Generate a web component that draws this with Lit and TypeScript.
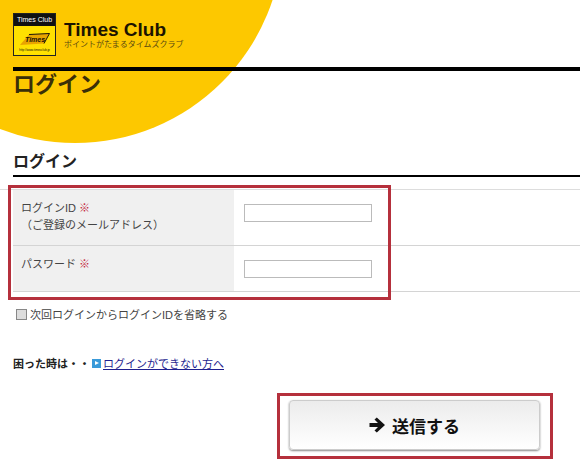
import { css, LitElement, html } from "lit";
import { customElement } from "lit/decorators.js";

@customElement("app-root")
export class AppRoot extends LitElement {
  render() {
    return html`
      <div class="page">
        <div class="circle"></div>
        <header class="head">
          <div class="logo">
            <div class="logo-top">Times Club</div>
            <div class="logo-body">
              <svg width="30" height="14" viewBox="0 0 30 14">
                <path d="M0 13 L24 11.5 L29.5 1.5 L9 2.5 Z" fill="#e8a400" />
                <path d="M9 2.5 L29.5 1.5 L24 11.5" fill="none" stroke="#1a1208" stroke-width="1" />
                <text x="5" y="10" class="logo-word">Times</text>
              </svg>
              <div class="logo-url">http://www.timesclub.jp</div>
            </div>
          </div>
          <div class="brand">
            <div class="brand-name">Times Club</div>
            <div class="brand-sub">ポイントがたまるタイムズクラブ</div>
          </div>
        </header>
        <h1>ログイン</h1>
        <h2>ログイン</h2>
        <div class="form">
          <div class="row first">
            <div class="label">
              ログインID <span class="req">※</span><br />
              <span class="note">（ご登録のメールアドレス）</span>
            </div>
            <div class="field"><input type="text" /></div>
          </div>
          <div class="row second">
            <div class="label">パスワード <span class="req">※</span></div>
            <div class="field"><input type="password" /></div>
          </div>
          <div class="mark mark-form"></div>
        </div>
        <label class="remember">
          <span class="box"></span>次回ログインからログインIDを省略する
        </label>
        <div class="help">
          <b>困った時は・・</b>
          <span class="help-icon"></span>
          <a href="#">ログインができない方へ</a>
        </div>
        <div class="actions">
          <button type="button">
            <svg width="17" height="16" viewBox="0 0 17 16">
              <path d="M0.5 6 H9 L5.5 2.6 L7.8 0.5 L16 8 L7.8 15.5 L5.5 13.4 L9 10 H0.5 Z" fill="#111" />
            </svg>
            送信する
          </button>
          <div class="mark mark-button"></div>
        </div>
      </div>
    `;
  }

  static styles = css`
    :host {
      display: block;
      width: 580px;
      height: 470px;
      overflow: hidden;
      background: #fff;
      color: #333;
      font-family: "Liberation Sans", "Noto Sans CJK JP", sans-serif;
      font-size: 11px;
    }

    .page {
      position: relative;
      width: 580px;
      height: 470px;
      padding: 13px 0 0 13px;
      box-sizing: border-box;
      overflow: hidden;
    }

    .circle {
      position: absolute;
      left: -133px;
      top: -273px;
      width: 416px;
      height: 416px;
      border-radius: 50%;
      background: #fdc800;
    }

    .head {
      position: relative;
      display: flex;
      gap: 8px;
      height: 54px;
      border-bottom: 4px solid #000;
    }

    .logo {
      width: 43px;
      height: 43px;
      box-sizing: border-box;
      border: 1px solid #222;
      display: flex;
      flex-direction: column;
      background: #ffe100;
    }

    .logo-top {
      height: 12px;
      background: #111;
      color: #fff;
      font-size: 7px;
      line-height: 12px;
      text-align: center;
      white-space: nowrap;
    }

    .logo-body {
      flex: 1;
      display: flex;
      flex-direction: column;
      align-items: center;
      padding-top: 6px;
    }

    .logo-word {
      fill: #1a1208;
      font-size: 7px;
      font-weight: 700;
      font-style: italic;
    }

    .logo-url {
      font-size: 3px;
      line-height: 5px;
      margin-top: 2px;
      color: #111;
      white-space: nowrap;
    }

    .brand {
      padding-top: 7px;
    }

    .brand-name {
      font-size: 19px;
      line-height: 20px;
      font-weight: 700;
      color: #1c1400;
    }

    .brand-sub {
      margin-top: -1px;
      font-size: 8px;
      line-height: 12px;
      color: #5a4a10;
      white-space: nowrap;
    }

    h1 {
      position: relative;
      margin: 0;
      height: 27px;
      font-size: 22px;
      line-height: 27px;
      font-weight: 700;
      color: #3a2f08;
    }

    h2 {
      position: relative;
      margin: 53px 0 0;
      height: 24px;
      font-size: 16px;
      line-height: 21px;
      font-weight: 700;
      color: #222;
      border-bottom: 2px solid #000;
      box-sizing: content-box;
    }

    .form {
      position: relative;
      margin: 12px 0 0 -13px;
      padding-left: 13px;
      border-top: 1px solid #ddd;
    }

    .row {
      display: flex;
      border-bottom: 1px solid #d4d4d4;
    }

    .row.first {
      height: 55px;
    }

    .row.second {
      height: 45px;
    }

    .label {
      width: 221px;
      box-sizing: border-box;
      padding: 10px 0 0 8px;
      background: #f0f0f0;
      line-height: 17px;
      color: #444;
    }

    .req {
      color: #c4263a;
    }

    .field {
      padding: 14px 0 0 10px;
    }

    input {
      display: block;
      width: 128px;
      height: 18px;
      box-sizing: border-box;
      margin: 0;
      border: 1px solid #bbb;
      background: #fff;
    }

    .mark {
      position: absolute;
      box-sizing: border-box;
      border: 3px solid #b5303c;
      pointer-events: none;
    }

    .mark-form {
      left: 8px;
      top: -5px;
      width: 383px;
      height: 115px;
    }

    .remember {
      display: flex;
      align-items: center;
      margin: 15px 0 0 3px;
      height: 14px;
      color: #444;
      white-space: nowrap;
    }

    .box {
      width: 9px;
      height: 9px;
      margin-right: 3px;
      border: 1px solid #888;
      background: #ddd;
    }

    .help {
      display: flex;
      align-items: center;
      margin-top: 35px;
      height: 14px;
      color: #222;
      white-space: nowrap;
    }

    .help b {
      width: 79px;
      font-weight: 700;
    }

    .help-icon {
      width: 9px;
      height: 9px;
      margin-right: 2px;
      background: #3a9ad9;
      position: relative;
    }

    .help-icon::after {
      content: "";
      position: absolute;
      left: 3px;
      top: 2px;
      border-left: 4px solid #fff;
      border-top: 2.5px solid transparent;
      border-bottom: 2.5px solid transparent;
    }

    a {
      color: #1f1f8f;
      text-decoration: underline;
    }

    .actions {
      position: relative;
      margin: 30px 0 0 276px;
      width: 251px;
    }

    button {
      display: flex;
      align-items: center;
      justify-content: center;
      gap: 6px;
      width: 251px;
      height: 50px;
      padding: 0;
      border: 1px solid #ccc;
      border-radius: 4px;
      background: linear-gradient(#ececec, #fff);
      box-shadow: 0 1px 2px #888;
      color: #111;
      font: 700 17px "Liberation Sans", "Noto Sans CJK JP", sans-serif;
    }

    .mark-button {
      left: -12px;
      top: -7px;
      width: 276px;
      height: 66px;
    }
  `;
}
